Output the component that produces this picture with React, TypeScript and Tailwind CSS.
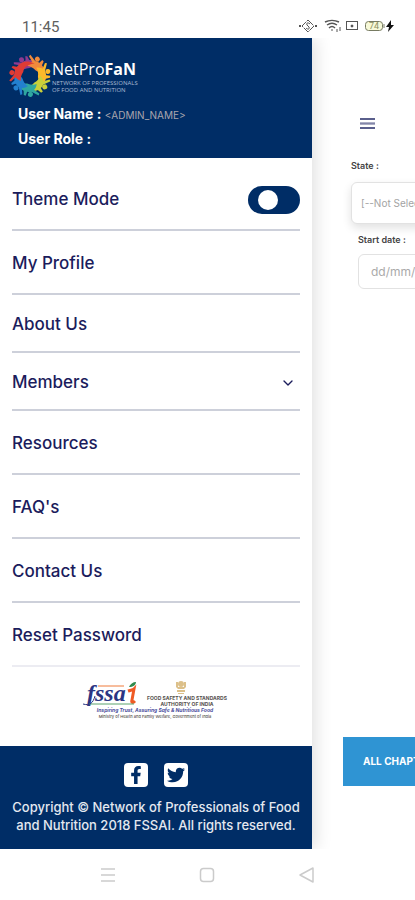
import { useState } from 'react'
import { FaFacebookF, FaTwitter } from 'react-icons/fa'
import { ChevronDown } from 'lucide-react'

const menuItems = [
  { label: 'My Profile' },
  { label: 'About Us', compact: true },
  { label: 'Members', compact: true, expandable: true },
  { label: 'Resources' },
  { label: "FAQ's" },
  { label: 'Contact Us' },
  { label: 'Reset Password' },
]

const petals = [
  { angle: -5, color: '#8e3a8f' },
  { angle: 46, color: '#f08a3c' },
  { angle: 98, color: '#fbb92b' },
  { angle: 149, color: '#c9cf3a' },
  { angle: 201, color: '#2fa7a0' },
  { angle: 252, color: '#2380cf' },
  { angle: 303, color: '#df3b35' },
]

function PinwheelLogo() {
  return (
    <svg viewBox="-22 -22 44 44" className="size-11 shrink-0" aria-hidden="true">
      {petals.map((p) => (
        <g key={p.angle} transform={`rotate(${p.angle})`} fill={p.color}>
          <path d="M-9 -5C-11 -11 -7 -17 1 -16C8 -15 12 -11 13 -3C9 -8 4 -10 0 -8C-4 -8 -7 -7 -9 -5Z" />
          <path d="M-7 -11L-15 -13L-15 -15L-6 -14Z" />
          <path d="M-3 -13L-3 -20L-1 -20L1 -15Z" />
          <circle cx="-7" cy="-17" r="2.500" />
        </g>
      ))}
    </svg>
  )
}

function FssaiLogo() {
  return (
    <svg viewBox="0 0 148 40" className="h-10 w-37" role="img" aria-label="FSSAI">
      <text x="5" y="20" fontFamily="Liberation Serif, serif" fontStyle="italic" fontWeight="bold" fontSize="24" fill="#2b3583">
        fssa
      </text>
      <path d="M46 10C49 9 51 9 52 8L50 19C49 22 51 22 53 20" fill="none" stroke="#ef5a24" strokeWidth="3" />
      <path d="M47 6C48 3 51 1 54 1C54 4 51 6 47 6Z" fill="#2f8a4c" />
      <path d="M16 5H42" stroke="#ef7a3a" strokeWidth="1" />
      <path d="M7 23H52" stroke="#5ba36c" strokeWidth="1" />
      <path d="M1 23C8 25 11 22 13 15" fill="none" stroke="#2b3583" strokeWidth="1" />
      <g fill="#dcc08a">
        <circle cx="99" cy="3" r="3" />
        <path d="M94 1H96V6H102V1H104V6L102 8H96L94 6Z" />
        <path d="M95 9H103V11H95Z" />
        <path d="M96 12H102V13H96Z" />
      </g>
      <g fontFamily="Inter, sans-serif" fontWeight="bold" textAnchor="middle">
        <text x="105" y="19" fontSize="5" fill="#55504e">FOOD SAFETY AND STANDARDS</text>
        <text x="105" y="25" fontSize="5" fill="#55504e">AUTHORITY OF INDIA</text>
        <text x="73" y="31" fontSize="5" fontStyle="italic" fill="#4a4d9c">Inspiring Trust, Assuring Safe &amp; Nutritious Food</text>
        <text x="73" y="37" fontSize="4" fontWeight="500" fill="#55504e">Ministry of Health and Family Welfare, Government of India</text>
      </g>
    </svg>
  )
}

function StatusBar() {
  return (
    <div className="flex h-[38px] items-end justify-between bg-white pr-5 pb-px pl-[22px]">
      <span className="font-[Roboto,sans-serif] text-[15px] leading-5 text-[#606060]">11:45</span>
      <svg viewBox="0 0 96 16" className="mb-[3px] h-4 w-24" fill="none" stroke="#555" strokeWidth="1" aria-hidden="true">
        <path d="M9 2L15 8L9 14L3 8Z" strokeDasharray="7 1" />
        <path d="M11 6C9 4 7 5 8 7L10 9C11 11 9 12 7 10" />
        <path d="M0 8H2M16 8H18" strokeWidth="2" />
        <path d="M26 4C30 2 36 2 40 4M28 7C31 5 35 5 38 7M30 10C32 8 34 8 36 10" strokeWidth="1.5" />
        <path d="M33 11V13M38 11V14M41 9V13" />
        <rect x="47.500" y="3.500" width="11" height="8" />
        <circle cx="53" cy="8" r="1" fill="#222" />
        <rect x="66.500" y="3.500" width="17" height="9" rx="3" fill="#f7f9d8" stroke="#777b62" />
        <path d="M85 6V10" stroke="#777b62" />
        <text x="75" y="11" fontFamily="Roboto, sans-serif" fontSize="9" textAnchor="middle" fill="#8d9160" stroke="none">74</text>
        <path d="M92 2L87 9H90L89 14L95 7H92Z" fill="#111" stroke="none" />
      </svg>
    </div>
  )
}

function Drawer() {
  const [dark, setDark] = useState(false)
  const rowClass = 'flex w-full items-center justify-between border-b-2 border-[#cdd0da] pt-1'

  return (
    <aside className="z-10 flex w-78 shrink-0 flex-col bg-white shadow-[4px_0_16px_rgba(0,0,0,0.12)]">
      <header className="h-30 bg-[#002d66] px-[18px] pt-4 text-white">
        <div className="-ml-[10px] flex items-center">
          <PinwheelLogo />
          <div className="font-['Open_Sans',sans-serif] whitespace-nowrap">
            <p className="text-[16px] leading-[22px]">
              NetPro<b>FaN</b>
            </p>
            <p className="text-[6px] leading-[7px] text-[#a9bad3]">
              NETWORK OF PROFESSIONALS
              <br />
              OF FOOD AND NUTRITION
            </p>
          </div>
        </div>
        <p className="mt-1 text-[14px] leading-6 font-bold">
          User Name : <span className="text-[10px] font-normal text-[#aaa6ad]">&lt;ADMIN_NAME&gt;</span>
        </p>
        <p className="text-[14px] leading-6 font-bold">User Role :</p>
      </header>

      <nav className="px-3 pt-[9px] text-[17px] font-medium text-[#1b1c5c]">
        <label className={`${rowClass} h-16`}>
          Theme Mode
          <input
            type="checkbox"
            role="switch"
            checked={dark}
            onChange={(e) => setDark(e.target.checked)}
            className="h-7 w-13 appearance-none rounded-full bg-[#002d66] py-1 pl-[10px] before:block before:size-5 before:rounded-full before:bg-white checked:pl-[22px]"
          />
        </label>
        {menuItems.map((item) =>
          item.expandable ? (
            <button key={item.label} type="button" className={`${rowClass} h-[58px] pr-1`}>
              {item.label}
              <ChevronDown className="size-4" />
            </button>
          ) : (
            <a key={item.label} href="#" className={`${rowClass} ${item.compact ? 'h-[58px]' : 'h-16'} last:border-[#ececf2]`}>
              {item.label}
            </a>
          ),
        )}
      </nav>

      <div className="flex h-[79px] justify-center pt-[14px]">
        <FssaiLogo />
      </div>

      <footer className="flex-1 bg-[#002d66] pt-[17px] text-center text-[13px] leading-[18px] font-medium text-[#e4e8f0]">
        <div className="mb-[11px] flex justify-center gap-4">
          <a href="#" aria-label="Facebook" className="flex size-6 items-center justify-center rounded bg-white text-[#002d66]">
            <FaFacebookF className="size-[18px]" />
          </a>
          <a href="#" aria-label="Twitter" className="flex size-6 items-center justify-center rounded bg-white text-[#002d66]">
            <FaTwitter className="size-[18px]" />
          </a>
        </div>
        Copyright © Network of Professionals of Food
        <br />
        and Nutrition 2018 FSSAI. All rights reserved.
      </footer>
    </aside>
  )
}

function Dashboard() {
  return (
    <main className="flex min-w-0 flex-1 flex-col overflow-hidden pt-[76px] pb-[63px] pl-[31px] whitespace-nowrap">
      <button type="button" aria-label="Open menu" className="ml-[15px] self-start text-[#5a5f8c]">
        <svg viewBox="0 0 20 20" className="size-5" stroke="currentColor" strokeWidth="2">
          <path d="M2 5H17M2 14H17" />
          <path d="M2 9H17M2 10H17" strokeWidth="1" />
        </svg>
      </button>
      <label htmlFor="state" className="mt-6 ml-2 text-[9px] leading-4 font-semibold text-[#444]">
        State :
      </label>
      <select
        id="state"
        className="mt-2 ml-2 h-[42px] w-50 appearance-none rounded-md border border-[#e2e2e2] bg-white px-[9px] text-[10px] text-[#a3a3a3] shadow-[0_4px_10px_rgba(0,0,0,0.12)]"
      >
        <option>[--Not Selected--]</option>
      </select>
      <label htmlFor="start" className="mt-2 ml-[15px] text-[9px] leading-4 font-semibold text-[#444]">
        Start date :
      </label>
      <input
        id="start"
        placeholder="dd/mm/yyyy"
        className="mt-[6px] ml-[15px] h-[35px] w-45 rounded-md border border-[#e2e2e2] px-3 text-[12px] placeholder:text-[#aaa]"
      />
      <button type="button" className="mt-auto h-[49px] w-40 bg-[#2f94d3] pl-5 text-left text-[10px] font-bold text-white">
        ALL CHAPTERS
      </button>
    </main>
  )
}

function SystemNav() {
  return (
    <div className="flex h-[51px] items-center justify-around bg-white px-[58px] text-[#cbcbcb]">
      <button type="button" aria-label="Recent apps">
        <svg viewBox="0 0 16 16" className="size-4" stroke="currentColor" strokeWidth="1.5">
          <path d="M1 2H15M1 8H15M1 14H15" />
        </svg>
      </button>
      <button type="button" aria-label="Home">
        <svg viewBox="0 0 16 16" className="size-4" fill="none" stroke="currentColor" strokeWidth="1.5">
          <rect x="1.500" y="1.500" width="13" height="13" rx="3" />
        </svg>
      </button>
      <button type="button" aria-label="Back">
        <svg viewBox="0 0 16 16" className="size-4" fill="none" stroke="currentColor" strokeWidth="1.5" strokeLinejoin="round">
          <path d="M14 1V15L1 8Z" />
        </svg>
      </button>
    </div>
  )
}

export default function App() {
  return (
    <div className="flex min-h-screen flex-col bg-white font-[Inter,sans-serif]">
      <StatusBar />
      <div className="flex flex-1 overflow-hidden">
        <Drawer />
        <Dashboard />
      </div>
      <SystemNav />
    </div>
  )
}
